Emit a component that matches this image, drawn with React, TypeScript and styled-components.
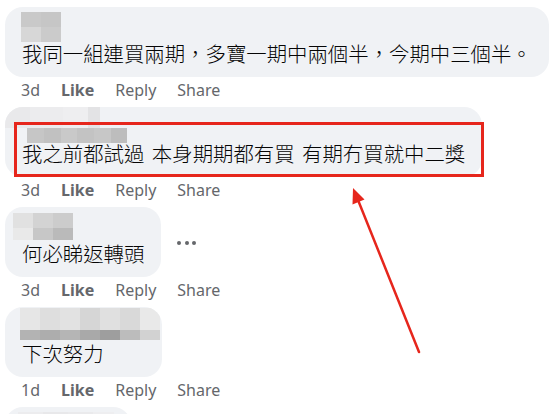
import React from "react";
import styled, { createGlobalStyle } from "styled-components";

const GlobalStyle = createGlobalStyle`
  html, body {
    margin: 0;
    padding: 0;
    background: #ffffff;
    overflow: hidden;
  }
`;

const Page = styled.div`
  position: relative;
  width: 559px;
  height: 414px;
  padding: 7px 0 0 5px;
  box-sizing: border-box;
  overflow: hidden;
`;

const CommentList = styled.div`
  display: flex;
  flex-direction: column;
  align-items: flex-start;
`;

const CommentBlock = styled.div`
  display: flex;
  flex-direction: column;
  align-items: flex-start;
`;

const BubbleRow = styled.div`
  display: flex;
  align-items: center;
  gap: 16px;
`;

const Bubble = styled.div`
  display: flex;
  flex-direction: column;
  align-items: flex-start;
  padding: 5px 17px 11px 17px;
  background: #f0f2f5;
  border-radius: 18px;
  overflow: hidden;
`;

const NameArea = styled.div`
  height: 28px;
`;

const Mosaic = styled.div<{ $dx: number; $dy: number; $dr: number }>`
  display: flex;
  flex-direction: column;
  margin: ${(p) => p.$dy}px ${(p) => p.$dr}px 0 ${(p) => p.$dx}px;
`;

const MosaicRow = styled.div<{ $x: number; $h: number }>`
  display: flex;
  margin-left: ${(p) => p.$x}px;
  height: ${(p) => p.$h}px;
`;

const Cell = styled.div<{ $w: number; $c: string }>`
  width: ${(p) => p.$w}px;
  height: 100%;
  background: ${(p) => p.$c};
`;

const CommentText = styled.div`
  font-family: "Noto Sans CJK TC", "Noto Sans CJK SC", sans-serif;
  font-size: 20.4px;
  font-weight: 300;
  line-height: 26px;
  color: #050505;
  white-space: nowrap;
  word-spacing: 3px;
`;

const MoreButton = styled.div`
  display: flex;
  gap: 3.5px;
  padding-top: 1px;
`;

const Dot = styled.span`
  width: 4px;
  height: 4px;
  border-radius: 50%;
  background: #65676b;
`;

const Actions = styled.div`
  display: flex;
  gap: 21px;
  height: 30px;
  box-sizing: border-box;
  padding: 3px 0 0 16px;
  font-family: "Noto Sans", "Open Sans", sans-serif;
  font-size: 16px;
  line-height: 20px;
  color: #65676b;
`;

const ActionItem = styled.span<{ $bold?: boolean }>`
  font-weight: ${(p) => (p.$bold ? 700 : 400)};
`;

const Highlight = styled.div`
  position: absolute;
  left: 14px;
  top: 122px;
  width: 470px;
  height: 55px;
  box-sizing: border-box;
  border: 3px solid #e6261c;
  pointer-events: none;
`;

const ArrowLayer = styled.svg`
  position: absolute;
  left: 0;
  top: 0;
  pointer-events: none;
`;

type Row = { x: number; h: number; cells: [number, string][] };
type Blur = { dx: number; dy: number; dr?: number; rows: Row[] };

interface IComment {
  blur: Blur;
  text: string;
  age?: string;
  more?: boolean;
}

const comments: IComment[] = [
  {
    blur: {
      dx: -1,
      dy: 0,
      rows: [
        { x: 0, h: 15, cells: [[20, "#c9c9c9"], [20, "#c6c6c6"]] },
        { x: 0, h: 15, cells: [[20, "#d7d7d7"], [20, "#cbcbcb"]] },
      ],
    },
    text: "我同一組連買兩期，多寶一期中兩個半，今期中三個半。",
    age: "3d",
  },
  {
    blur: {
      dx: -17,
      dy: -5,
      rows: [
        {
          x: 0,
          h: 21,
          cells: [[25, "#e9e9eb"], [33, "#ececee"], [25, "#eeeef0"], [12, "#e3e3e5"]],
        },
        {
          x: 22,
          h: 15,
          cells: [
            [17, "#c6c6c6"],
            [17, "#c1c1c1"],
            [16, "#c9c9c9"],
            [17, "#c3c3c3"],
            [17, "#c7c7c7"],
            [16, "#bdbdbd"],
          ],
        },
      ],
    },
    text: "我之前都試過 本身期期都有買 有期冇買就中二獎",
    age: "3d",
  },
  {
    blur: {
      dx: -9,
      dy: 1,
      rows: [
        { x: 0, h: 15, cells: [[20, "#e1e1e1"], [20, "#d3d3d3"], [20, "#cccccc"]] },
        { x: 0, h: 12, cells: [[20, "#e9e9e9"], [20, "#c7c7c7"], [20, "#bababa"]] },
      ],
    },
    text: "何必睇返轉頭",
    age: "3d",
    more: true,
  },
  {
    blur: {
      dx: -2,
      dy: -4,
      dr: -15,
      rows: [
        {
          x: 0,
          h: 22,
          cells: [
            [20, "#e6e6e6"],
            [20, "#dedede"],
            [20, "#e2e2e2"],
            [20, "#d6d6d6"],
            [20, "#e0e0e0"],
            [20, "#d9d9d9"],
            [20, "#e9e9e9"],
          ],
        },
        {
          x: 0,
          h: 10,
          cells: [
            [20, "#b3b3b3"],
            [20, "#adadad"],
            [20, "#b5b5b5"],
            [20, "#a9a9a9"],
            [20, "#9e9e9e"],
            [20, "#bcbcbc"],
            [20, "#d2d2d2"],
          ],
        },
      ],
    },
    text: "下次努力",
    age: "1d",
  },
  // next comment, only its top edge is in view
  {
    blur: {
      dx: -4,
      dy: 0,
      rows: [
        { x: 0, h: 15, cells: [[25, "#ececee"], [25, "#e8e8ea"], [25, "#eaeaec"], [21, "#eeeef0"]] },
        { x: 0, h: 13, cells: [[25, "#dcdcdc"], [25, "#d4d4d4"], [25, "#d8d8d8"], [21, "#e0e0e0"]] },
      ],
    },
    text: "",
  },
];

function NameBlur({ blur }: { blur: Blur }) {
  return (
    <NameArea>
      <Mosaic $dx={blur.dx} $dy={blur.dy} $dr={blur.dr ?? 0}>
        {blur.rows.map((row, i) => (
          <MosaicRow key={i} $x={row.x} $h={row.h}>
            {row.cells.map(([w, c], j) => (
              <Cell key={j} $w={w} $c={c} />
            ))}
          </MosaicRow>
        ))}
      </Mosaic>
    </NameArea>
  );
}

function Comment({ comment }: { comment: IComment }) {
  return (
    <CommentBlock>
      <BubbleRow>
        <Bubble>
          <NameBlur blur={comment.blur} />
          <CommentText>{comment.text || "\u00a0"}</CommentText>
        </Bubble>
        {comment.more ? (
          <MoreButton>
            <Dot />
            <Dot />
            <Dot />
          </MoreButton>
        ) : null}
      </BubbleRow>
      {comment.age ? (
        <Actions>
          <ActionItem>{comment.age}</ActionItem>
          <ActionItem $bold>Like</ActionItem>
          <ActionItem>Reply</ActionItem>
          <ActionItem>Share</ActionItem>
        </Actions>
      ) : null}
    </CommentBlock>
  );
}

export default function App() {
  return (
    <>
      <GlobalStyle />
      <Page>
        <CommentList>
          {comments.map((c, i) => (
            <Comment key={i} comment={c} />
          ))}
        </CommentList>
        <Highlight />
        <ArrowLayer width="559" height="414" viewBox="0 0 559 414">
          <line
            x1="419"
            y1="352"
            x2="358"
            y2="200"
            stroke="#e6261c"
            strokeWidth="2.5"
            strokeLinecap="round"
          />
          <polygon points="353,188 364.5,199.5 352.5,204.5" fill="#e6261c" />
        </ArrowLayer>
      </Page>
    </>
  );
}
